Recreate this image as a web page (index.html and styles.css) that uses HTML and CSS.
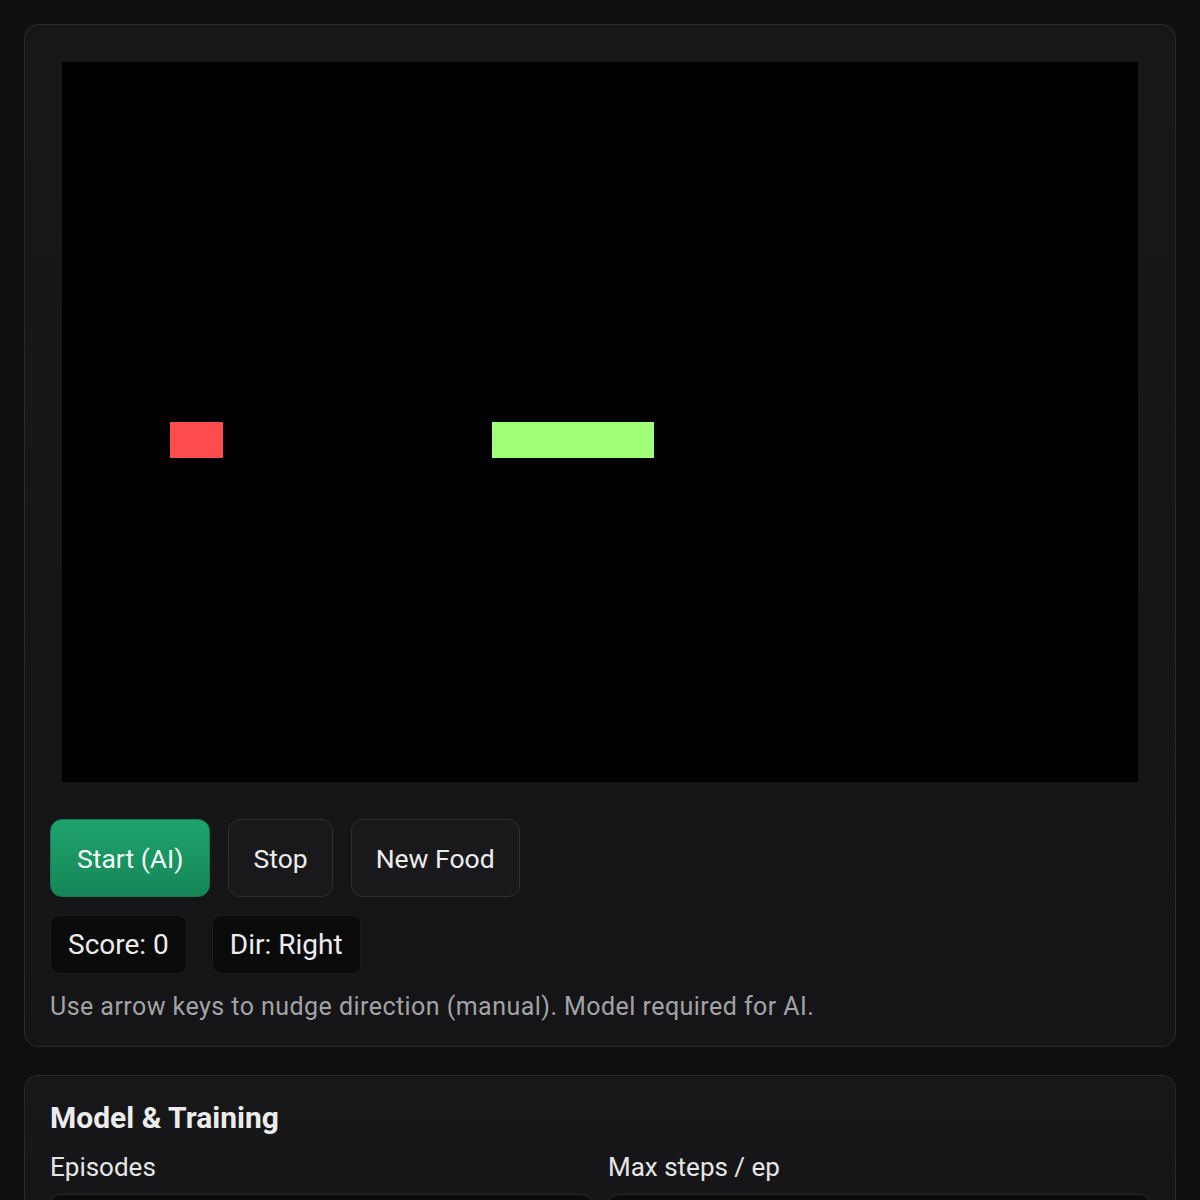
FILE: index.html
```html
<!DOCTYPE html>
<html lang="en">
<head>
  <meta charset="UTF-8" />
  <meta name="viewport" content="width=device-width, initial-scale=1.0"/>
  <title>Snake RL</title>
  <link rel="stylesheet" href="styles.css">
</head>
<body>

  <div class="card">
    <div class="board-wrap">
      <div class="board" id="board">
        <div class="cell food" style="left: 10%; top: 50%;"></div>
        <div class="cell snake" style="left: 40%; top: 50%; width: 15%;"></div>
      </div>
    </div>

    <div class="controls">
      <button class="btn primary" id="startBtn">Start (AI)</button>
      <button class="btn" id="stopBtn">Stop</button>
      <button class="btn" id="foodBtn">New Food</button>
    </div>

    <div class="stats">
      <div class="pill" id="score">Score: 0</div>
      <div class="pill" id="dir">Dir: Right</div>
    </div>

    <p class="hint">Use arrow keys to nudge direction (manual). Model required for AI.</p>
  </div>

  <div class="card">
    <h2>Model &amp; Training</h2>
    <div class="form-grid">
      <div class="field">
        <label for="episodes">Episodes</label>
        <input type="number" id="episodes" value="500" />
      </div>
      <div class="field">
        <label for="maxSteps">Max steps / ep</label>
        <input type="number" id="maxSteps" value="400" />
      </div>
    </div>
  </div>

</body>
</html>
```

FILE: styles.css
```css
body {
  margin: 0;
  padding: 24px;
  font-family: Roboto, "Liberation Sans", sans-serif;
  background-color: #0f0f10;
  color: #ececec;
}

.card {
  background: linear-gradient(180deg, #171719 0%, #151517 100%);
  border: 1px solid #2a2a2d;
  border-radius: 14px;
  padding: 25px 25px 23px;
  margin-bottom: 28px;
}

.board-wrap {
  padding: 12px;
}

.board {
  position: relative;
  height: 720px;
  background: #000;
}

/* 20x20 grid, each cell 5% of the board */
.cell {
  position: absolute;
  width: 5%;
  height: 5%;
}

.food {
  background: #ff4d4f;
}

.snake {
  background: #a0ff78;
}

.controls {
  display: flex;
  gap: 18px;
  margin-top: 25px;
}

.btn {
  font-family: inherit;
  font-size: 26.5px;
  color: #ececec;
  background-color: #19191b;
  border: 1px solid #303034;
  border-radius: 12px;
  padding: 0 24px;
  height: 78px;
  cursor: pointer;
}

.btn.primary {
  background: linear-gradient(180deg, #1ea36d 0%, #168657 100%);
  border-color: #157a50;
  color: #f2fff8;
  padding: 0 26px;
}

.stats {
  display: flex;
  gap: 25px;
  margin-top: 18px;
}

.pill {
  font-size: 28px;
  background-color: #0b0b0c;
  border: 1px solid #1c1c1e;
  border-radius: 9px;
  padding: 0 17px;
  height: 57px;
  display: flex;
  align-items: center;
}

.hint {
  margin: 17px 0 0;
  font-size: 25px;
  letter-spacing: 0.45px;
  line-height: 32px;
  color: #a3a3a6;
}

h2 {
  margin: 0;
  font-size: 30px;
  line-height: 34px;
  font-weight: 700;
  color: #ececec;
}

.form-grid {
  display: grid;
  grid-template-columns: 1fr 1fr;
  gap: 16px;
  margin-top: 14px;
}

.field label {
  display: block;
  font-size: 26px;
  line-height: 36px;
  color: #e6e6e6;
  margin-bottom: 9px;
}

.field input {
  box-sizing: border-box;
  width: 100%;
  height: 60px;
  font-family: inherit;
  font-size: 24px;
  color: #ececec;
  background: #0b0b0c;
  border: 1px solid #2a2a2d;
  border-radius: 10px;
  padding: 0 16px;
}
```
